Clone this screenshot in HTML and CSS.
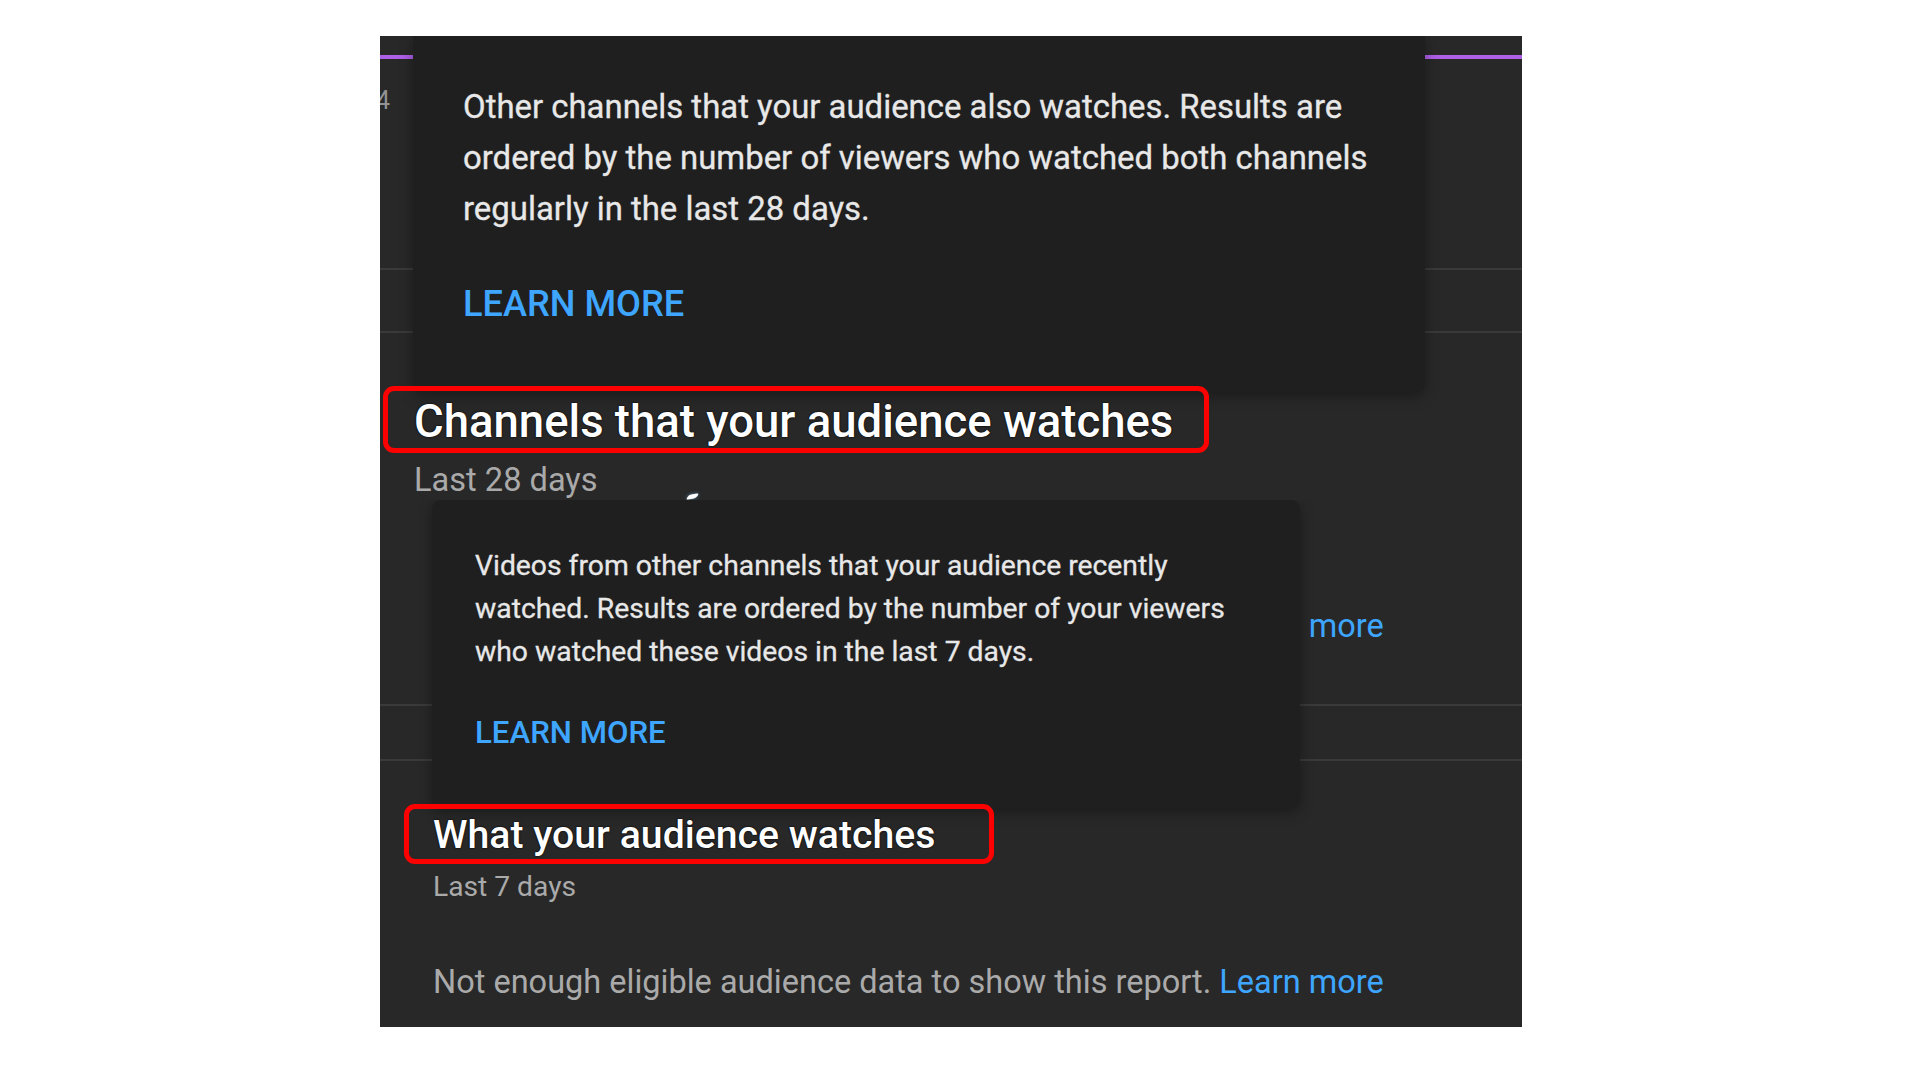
FILE: index.html
```html
<!DOCTYPE html>
<html lang="en">
<head>
<meta charset="utf-8">
<title>Audience reports</title>
<link rel="stylesheet" href="styles.css">
</head>
<body>
  <main class="panel">
    <!-- Upper part: channels report with its info tooltip open -->
    <section class="shot shot-a">
      <div class="tab-line"></div>
      <div class="stat">14</div>
      <div class="divider first"></div>
      <div class="divider second"></div>
      <div class="head-box head-box-a">
        <h2 class="title title-a">Channels that your audience watches</h2>
      </div>
      <div class="period period-a">Last 28 days</div>

      <div class="tooltip tooltip-a">
        <p class="tip-text">Other channels that your audience also watches. Results are<br>ordered by the number of viewers who watched both channels<br>regularly in the last 28 days.</p>
        <a class="tip-link" href="#">LEARN MORE</a>
      </div>
      <span class="pointer"></span>
    </section>

    <!-- Lower part: videos report with its info tooltip open -->
    <section class="shot shot-b">
      <p class="note note-hidden">Not enough eligible audience data to show this report. <a href="#">Learn more</a></p>
      <div class="divider third"></div>
      <div class="divider fourth"></div>
      <div class="head-box head-box-b">
        <h2 class="title title-b">What your audience watches</h2>
      </div>
      <div class="period period-b">Last 7 days</div>
      <p class="note note-last">Not enough eligible audience data to show this report. <a href="#">Learn more</a></p>

      <div class="tooltip tooltip-b">
        <p class="tip-text">Videos from other channels that your audience recently<br>watched. Results are ordered by the number of your viewers<br>who watched these videos in the last 7 days.</p>
        <a class="tip-link" href="#">LEARN MORE</a>
      </div>
    </section>
  </main>
</body>
</html>
```

FILE: styles.css
```css
* {
  box-sizing: border-box;
}

html, body {
  margin: 0;
  padding: 0;
  background: #ffffff;
}

body {
  font-family: Roboto, "Noto Sans", "Liberation Sans", sans-serif;
  width: 1920px;
  height: 1080px;
  overflow: hidden;
}

a {
  color: #3ea6ff;
  text-decoration: none;
}

/* Dark studio card */
.panel {
  margin: 36px 0 0 380px;
  width: 1142px;
  height: 991px;
  background: #282828;
  display: flex;
  flex-direction: column;
  overflow: hidden;
}

.shot {
  position: relative;
  display: flex;
  flex-direction: column;
  overflow: hidden;
  flex: none;
}

.shot-a {
  height: 464px;
}

.shot-b {
  height: 527px;
}

/* Selected tab underline */
.tab-line {
  margin-top: 19px;
  height: 4px;
  background: #ad5fe6;
}

.stat {
  margin: 30px 0 0 -6px;
  height: 24px;
  line-height: 24px;
  font-size: 25px;
  color: #929292;
  letter-spacing: 4px;
  direction: rtl;
  width: 20px;
  overflow: hidden;
  white-space: nowrap;
}

.divider {
  height: 2px;
  background: #3a3a3a;
  flex: none;
}

.divider.first { margin-top: 158px; }
.divider.second { margin-top: 61px; }
.divider.third { margin-top: 60px; }
.divider.fourth { margin-top: 53px; }

/* Red outline around each report title, drawn above the tooltips */
.head-box {
  position: relative;
  z-index: 2;
  border: 5px solid #fd0000;
  border-radius: 11px;
  display: flex;
  align-items: center;
  flex: none;
}

.head-box-a {
  margin: 53px 0 0 3px;
  width: 826px;
  height: 67px;
  padding: 5px 0 0 26px;
}

.head-box-b {
  margin: 43px 0 0 24px;
  width: 590px;
  height: 60px;
  padding: 2px 0 0 24px;
}

.title {
  margin: 0;
  color: #ffffff;
  font-weight: 500;
  white-space: nowrap;
  text-shadow: 0 0 2px #000000, 0 0 1px #000000;
}

.title-a {
  font-size: 45.5px;
  line-height: 56px;
}

.title-b {
  font-size: 39.2px;
  line-height: 48px;
}

.period {
  color: #aaaaaa;
  white-space: nowrap;
}

.period-a {
  margin: 7px 0 0 34px;
  font-size: 32.6px;
  line-height: 40px;
}

.period-b {
  margin: 6px 0 0 53px;
  font-size: 28.2px;
  line-height: 34px;
}

.note {
  margin: 0 0 0 53px;
  font-size: 32.5px;
  line-height: 36px;
  color: #aaaaaa;
  white-space: nowrap;
}

.note-hidden {
  margin-top: 108px;
}

.note-last {
  margin-top: 60px;
}

/* Info tooltips laid over the report */
.tooltip {
  position: absolute;
  z-index: 1;
  top: 0;
  background: #1f1f1f;
  box-shadow: 0 4px 14px rgba(0, 0, 0, 0.35);
  display: flex;
  flex-direction: column;
  align-items: flex-start;
}

.tooltip-a {
  left: 33px;
  width: 1012px;
  height: 356px;
  border-radius: 0 0 9px 9px;
  padding: 45px 0 0 50px;
}

.tooltip-b {
  left: 52px;
  width: 868px;
  height: 308px;
  border-radius: 9px;
  padding: 44px 0 0 43px;
}

.tip-text {
  margin: 0;
  color: #e8e8e8;
  white-space: nowrap;
  -webkit-text-stroke: 0.3px #e8e8e8;
}

.tooltip-a .tip-text {
  font-size: 32.9px;
  line-height: 51px;
}

.tooltip-b .tip-text {
  font-size: 28.3px;
  line-height: 43px;
}

.tip-link {
  font-weight: 500;
  white-space: nowrap;
}

.tooltip-a .tip-link {
  margin-top: 50px;
  font-size: 36.2px;
  line-height: 40px;
}

.tooltip-b .tip-link {
  margin-top: 42px;
  font-size: 31.2px;
  line-height: 36px;
}

/* Small caret mark left at the top of the lower tooltip */
.pointer {
  position: absolute;
  z-index: 2;
  left: 308px;
  top: 458px;
  width: 9px;
  height: 5px;
  background: #ffffff;
  border-radius: 2px;
  transform: skewX(-40deg) rotate(-12deg);
  box-shadow: 0 0 3px rgba(120, 200, 255, 0.6);
}
```
